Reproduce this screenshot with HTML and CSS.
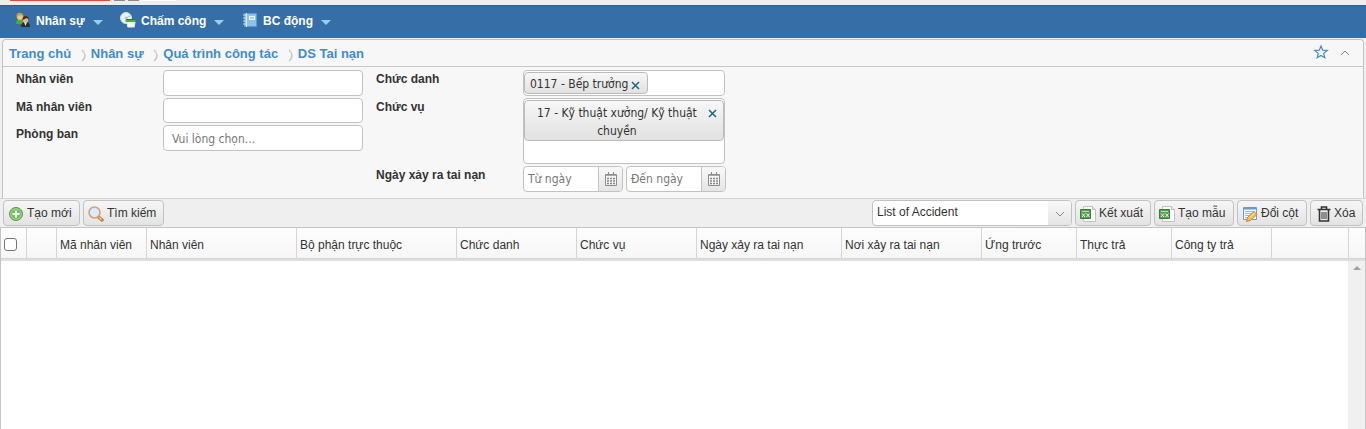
FILE: index.html
```html
<!DOCTYPE html>
<html lang="vi">
<head>
<meta charset="utf-8">
<title>DS Tai nạn</title>
<link rel="stylesheet" href="styles.css">
</head>
<body>
<div class="strip"><i class="strip-red"></i><i class="strip-dot"></i><i class="strip-dot"></i><i class="strip-white"></i></div>
<nav class="menu">
  <a class="menu-item m1"><svg width="16" height="16" viewBox="0 0 16 16"><path d="M1 12q0-5 4-5t5 5z" fill="#53a83a"/><circle cx="5" cy="5" r="3" fill="#f3c681"/><path d="M1.500 6V3q1-3 4-2 3 0 3 4L6 3 3 4z" fill="#c5a14e"/><path d="M6 15q0-5 4.500-5t4.500 5z" fill="#292e34"/><path d="M9 10l1.500 4 1.500-4z" fill="#eee"/><circle cx="10.500" cy="8" r="2.700" fill="#e9b48c"/><path d="M7.500 8q0-4 3-4t3.500 4l-2-2z" fill="#47301d"/></svg><span>Nhân sự</span><i class="caret"></i></a>
  <a class="menu-item m2"><svg width="16" height="16" viewBox="0 0 16 16"><circle cx="6" cy="6" r="5.500" fill="#edf2f5" stroke="#d0dde5"/><circle cx="6" cy="6" r="1.500" fill="#b9c7d0"/><path d="M6 6l4-2" stroke="#a5b7c3"/><path d="M7 10h8l-.7 5H7.700z" fill="#fff" stroke="#dfe8e4"/><path d="M5.500 8h10v2h-10z" fill="#4dae39"/><path d="M6 7.500h9" stroke="#2d7d26"/></svg><span>Chấm công</span><i class="caret"></i></a>
  <a class="menu-item m3"><svg width="16" height="16" viewBox="0 0 16 16"><path d="M2.500 1.500h12v13h-12z" fill="#8fc1ed" stroke="#5e9bd4"/><path d="M4.500 1v14" stroke="#e0effb"/><path d="M1 3h3M1 6h3M1 9h3M1 12h3" stroke="#c9e0f3"/><path d="M7 4h6v4H7z" fill="#ecf5fd"/><path d="M8 6h4" stroke="#78a6ce"/></svg><span>BC động</span><i class="caret"></i></a>
</nav>
<section class="panel">
  <header class="crumbs">
    <a>Trang chủ</a><svg class="sep" width="5" height="13" viewBox="0 0 5 13"><path d="M1 1q3 2.500 3 5.500T1 12"/></svg><a>Nhân sự</a><svg class="sep" width="5" height="13" viewBox="0 0 5 13"><path d="M1 1q3 2.500 3 5.500T1 12"/></svg><a>Quá trình công tác</a><svg class="sep" width="5" height="13" viewBox="0 0 5 13"><path d="M1 1q3 2.500 3 5.500T1 12"/></svg><a>DS Tai nạn</a>
    <svg class="star" width="16" height="16" viewBox="0 0 16 16"><path d="M8 2l1.700 4.200 4.500.3-3.500 2.900 1.100 4.400L8 11.400l-3.800 2.400 1.100-4.400-3.500-2.900 4.500-.3z" fill="none" stroke="#428bca" stroke-width="1.200"/></svg>
    <svg class="up" width="10" height="6" viewBox="0 0 10 6"><path d="M1 5l4-4 4 4" fill="none" stroke="#888"/></svg>
  </header>
  <div class="form">
    <div class="labels left"><b>Nhân viên</b><b>Mã nhân viên</b><b>Phòng ban</b></div>
    <div class="fields">
      <div class="box"></div><div class="box short"></div><div class="box ph">Vui lòng chọn...</div>
    </div>
    <div class="labels right"><b>Chức danh</b><b>Chức vụ</b><b>Ngày xảy ra tai nạn</b></div>
    <div class="fields wide">
      <div class="box tags"><div class="tag"><span>0117 - Bếp trưởng</span><svg class="x" width="9" height="9" viewBox="0 0 9 9"><path d="M1 1l7 7M8 1L1 8"/></svg></div></div>
      <div class="box tags tall"><div class="tag big"><span>17 - Kỹ thuật xưởng/ Kỹ thuật<br>chuyền</span><svg class="x" width="9" height="9" viewBox="0 0 9 9"><path d="M1 1l7 7M8 1L1 8"/></svg></div></div>
      <div class="dates">
        <div class="date"><span>Từ ngày</span><i><svg width="12" height="14" viewBox="0 0 12 14"><path d="M.5 2.500h11v11H.5z" fill="#f6f6f6" stroke="#8c8c8c"/><path d="M1 3.500h10" stroke="#aaa"/><path d="M3.500 0v3M8.500 0v3" stroke="#888"/><path d="M2 6.500h8M2 9h8M2 11.500h8" stroke="#858585" stroke-width="1.500" stroke-dasharray="2 1"/></svg></i></div>
        <div class="date"><span>Đến ngày</span><i><svg width="12" height="14" viewBox="0 0 12 14"><path d="M.5 2.500h11v11H.5z" fill="#f6f6f6" stroke="#8c8c8c"/><path d="M1 3.500h10" stroke="#aaa"/><path d="M3.500 0v3M8.500 0v3" stroke="#888"/><path d="M2 6.500h8M2 9h8M2 11.500h8" stroke="#858585" stroke-width="1.500" stroke-dasharray="2 1"/></svg></i></div>
      </div>
    </div>
  </div>
</section>
<div class="toolbar">
  <button class="btn b1"><svg width="16" height="16" viewBox="0 0 16 16"><circle cx="8" cy="8" r="6.500" fill="#72bd5c" stroke="#4d9b49"/><circle cx="8" cy="8" r="5.300" fill="none" stroke="#a8d99c"/><path d="M8 4.500v7M4.500 8h7" stroke="#fff" stroke-width="2.200"/></svg><span>Tạo mới</span></button>
  <button class="btn b2"><svg width="16" height="16" viewBox="0 0 16 16"><path d="M10.500 11l3.500 3" stroke="#bd7c3e" stroke-width="3.400" stroke-linecap="round"/><path d="M11 11.300l2.500 2.300" stroke="#f5cf8c" stroke-width="1.500"/><circle cx="6.500" cy="6.500" r="5.500" fill="#dcebf5" stroke="#d0a27c" stroke-width="1.500"/></svg><span>Tìm kiếm</span></button>
  <div class="select"><span>List of Accident</span><i><svg width="10" height="6" viewBox="0 0 10 6"><path d="M1 1l4 4 4-4" fill="none" stroke="#888"/></svg></i></div>
  <button class="btn b3"><svg width="16" height="16" viewBox="0 0 16 16"><path d="M3.500.5h9l3 3v12h-12z" fill="#fff" stroke="#c2c2c2"/><path d="M12.500.5v3h3" fill="#eee" stroke="#bbb"/><path d="M.5 3.500h10v9H.5z" fill="#5aa052" stroke="#3a7d37"/><path d="M2 5.500h7" stroke="#b8d9b2"/><path d="M2 7.500l3 3.500M5 7.500L2 11M6.500 7.500l3 3.500M9.500 7.500l-3 3.500" stroke="#e4f2e0" fill="none"/></svg><span>Kết xuất</span></button>
  <button class="btn b4"><svg width="16" height="16" viewBox="0 0 16 16"><path d="M3.500.5h9l3 3v12h-12z" fill="#fff" stroke="#c2c2c2"/><path d="M12.500.5v3h3" fill="#eee" stroke="#bbb"/><path d="M.5 3.500h10v9H.5z" fill="#5aa052" stroke="#3a7d37"/><path d="M2 5.500h7" stroke="#b8d9b2"/><path d="M2 7.500l3 3.500M5 7.500L2 11M6.500 7.500l3 3.500M9.500 7.500l-3 3.500" stroke="#e4f2e0" fill="none"/></svg><span>Tạo mẫu</span></button>
  <button class="btn b5"><svg width="16" height="16" viewBox="0 0 16 16"><path d="M1.500 1.500h13v12h-13z" fill="#f4f8fd" stroke="#719bd0"/><path d="M2 2.500h12" stroke="#6698d4" stroke-width="2"/><path d="M3 5.500h10M3 7.500h10M3 9.500h5M3 11.500h4" stroke="#9ebbe0"/><path d="M4.500 15.500l1-4 6.500-6 3 3-6.500 6z" fill="#f4bd49" stroke="#c58a45"/><path d="M7.500 11.500l5-4.500" stroke="#fff0a0"/></svg><span>Đổi cột</span></button>
  <button class="btn b6"><svg width="14" height="16" viewBox="0 0 14 16"><path d="M.5 3.500h13M4.500 3V1h5v2M2.500 4v11h9V4" fill="none" stroke="#333" stroke-width="1.600"/><path d="M5 6v7M7 6v7M9 6v7" stroke="#333"/></svg><span>Xóa</span></button>
</div>
<div class="grid">
  <div class="head">
    <div class="check"><i></i></div><div></div>
    <div>Mã nhân viên</div><div>Nhân viên</div><div>Bộ phận trực thuộc</div><div>Chức danh</div><div>Chức vụ</div><div>Ngày xảy ra tai nạn</div><div>Nơi xảy ra tai nạn</div><div>Ứng trước</div><div>Thực trả</div><div>Công ty trả</div><div></div><div class="last"></div>
  </div>
  <div class="body"><div class="scroll"><i></i></div></div>
</div>
</body>
</html>
```
FILE: styles.css
```css
* { box-sizing: border-box; }
body { margin: 0; height: 429px; overflow: hidden; background: #f0f0f0; color: #333; font: 12px/16px "Liberation Sans", Arial, sans-serif; display: flex; flex-direction: column; white-space: nowrap; }
svg { display: block; flex: none; }
i { flex: none; }
.strip { height: 5px; flex: none; display: flex; padding-left: 10px; background: #ededed; }
.strip i { height: 1px; }
.strip-red { width: 100px; background: #e8443a; margin-right: 4px; }
.strip-dot { width: 11px; background: #8b8b8b; margin-right: 3px; }
.strip-white { width: 34px; background: #fff; }
.menu { height: 33px; flex: none; background: #366ea8; border-top: 1px solid #2f6195; display: flex; padding-left: 15px; color: #fff; font-weight: bold; }
.menu-item { display: flex; padding-top: 6px; }
.menu-item span { margin: 1px 0 0 5px; }
.menu-item.m2 svg { margin-left: 1px; }
.m1 { width: 104px; }
.m2 { width: 123px; }
.caret { margin: 8px 0 0 8px; width: 10px; height: 5px; border: 5px solid transparent; border-top-color: #9ccbec; border-bottom: 0; }
.panel { height: 159px; flex: none; margin: 1px 2px 0; border: 1px solid #c3c3c3; border-bottom: 0; border-radius: 4px 4px 0 0; background: #f7f7f7; }
.crumbs { height: 27px; border-bottom: 1px solid #c8c8c8; display: flex; align-items: center; padding: 2px 13px 0 6px; font-size: 13px; font-weight: bold; color: #428bca; }
.sep { margin: 2px 5px 0 9.700px; fill: none; stroke: #c8c8c8; stroke-width: 1.600; }
.star { margin-left: auto; margin-right: 11px; margin-top: -4px; }
.up { margin-top: -2px; }
.form { display: flex; padding: 3px 0 0 13px; }
.labels { display: flex; flex-direction: column; gap: 12px; padding-top: 1px; font-weight: bold; }
.labels b:nth-child(3) { margin-top: -1px; }
.left { width: 147px; }
.right { width: 147px; margin-left: 13px; }
.right b:nth-child(3) { margin-top: 40px; }
.fields { width: 200px; display: flex; flex-direction: column; gap: 2px; font: 12px/18px "DejaVu Sans Condensed", "DejaVu Sans", sans-serif; font-stretch: condensed; }
.wide { width: 203px; }
.box { height: 26px; border: 1px solid #c2c2c2; border-radius: 4px; background: #fff; }
.short { height: 25px; }
.ph { padding: 4px 8px; color: #777; }
.tags { width: 202px; }
.tall { height: 66px; }
.tag { display: inline-flex; align-items: center; height: 22px; margin-top: 1px; padding: 2px 7px 0 5px; border: 1px solid #bbb; border-radius: 4px; background: linear-gradient(#f7f7f7, #e1e1e1); width: 124px; justify-content: space-between; vertical-align: top; }
.x { fill: none; stroke: #1e667b; stroke-width: 1.500; }
.tag .x { margin-top: 2px; }
.big { width: 200px; height: 41px; text-align: center; align-items: flex-start; padding: 3px 6px 0 12px; }
.big .x { margin-top: 5px; }
.dates { display: flex; gap: 3px; }
.date { width: 100px; height: 26px; border: 1px solid #c2c2c2; border-radius: 4px; background: #fff; color: #777; display: flex; overflow: hidden; }
.date span { flex: 1; padding: 3px 0 0 4px; }
.date i { width: 24px; border-left: 1px solid #c2c2c2; background: linear-gradient(#f8f8f8, #e5e5e5); display: flex; align-items: center; justify-content: center; }
.toolbar { height: 29px; flex: none; display: flex; align-items: center; padding: 0 3px; border-top: 1px solid #d5d5d5; background: #efefef; }
.btn { height: 26px; display: flex; align-items: center; padding: 1px 0 0 4px; border: 1px solid #c2c2c2; border-radius: 4px; background: linear-gradient(#f6f6f6, #e3e3e3); color: #333; font: 12px/16px "Liberation Sans", Arial, sans-serif; }
.btn span { margin: -2px 0 0 3px; }
.b1 { width: 77px; margin-right: 3px; }
.b2 { width: 81px; }
.b3 { width: 76px; margin-right: 3px; }
.b4 { width: 80px; margin-right: 3px; }
.b5 { width: 70px; margin-right: 3px; }
.b6 { width: 53px; padding-left: 6px; }
.select { width: 200px; height: 26px; margin-left: auto; margin-right: 3px; border: 1px solid #c2c2c2; border-radius: 4px; background: #fff; display: flex; overflow: hidden; }
.select span { flex: 1; padding: 3px 0 0 4px; }
.select i { width: 23px; background: linear-gradient(#f8f8f8, #e5e5e5); display: flex; justify-content: center; align-items: center; padding-top: 2px; }
.grid { flex: 1; border: 1px solid #c4c4c4; border-bottom: 0; display: flex; flex-direction: column; }
.head { height: 31px; flex: none; display: grid; grid-template-columns: 26px 30px 90px 150px 160px 120px 120px 145px 140px 95px 95px 100px 77px 1fr; background: linear-gradient(#fdfdfd, #f6f6f6); }
.head > div { border-right: 1px solid #d5d5d5; border-bottom: 1px solid #d5d5d5; padding: 9px 0 0 3px; }
.head .last { border-right: 0; }
.check i { display: block; width: 13px; height: 13px; margin-top: 1px; border: 1px solid #767676; border-radius: 3px; background: #fff; }
.body { flex: 1; border-top: 2px solid #dfdfdf; background: #fff; display: flex; justify-content: flex-end; }
.scroll { width: 17px; background: #f0f0f0; padding: 5px 0 0 5px; }
.scroll i { display: block; width: 8px; height: 4px; border: 4px solid transparent; border-bottom-color: #a0a0a0; border-top: 0; }
```
